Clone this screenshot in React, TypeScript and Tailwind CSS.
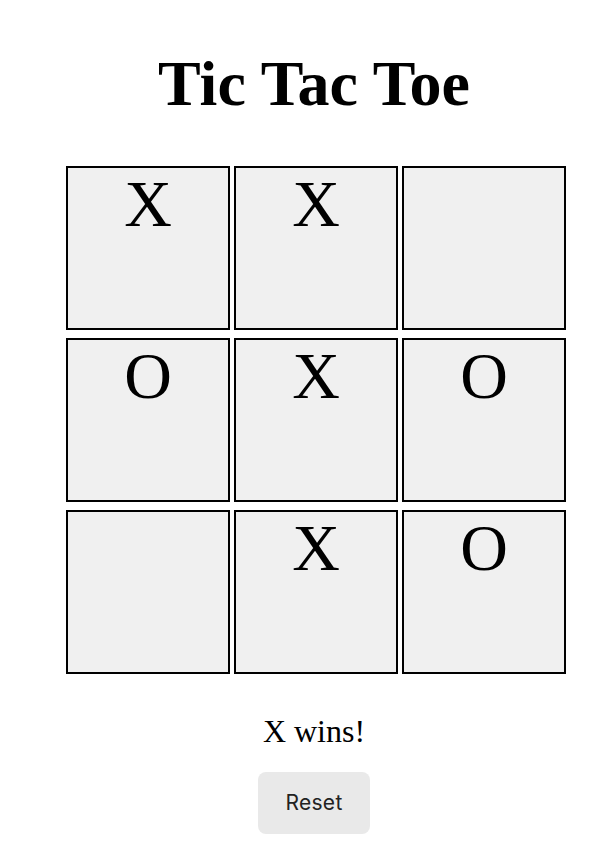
import React from 'react';

const board = ['X', 'X', '', 'O', 'X', 'O', '', 'X', 'O'];

export default function App() {
    return (
        <div className="min-h-screen bg-white flex flex-col items-center pl-[14px] text-black font-['Liberation_Serif',serif]">
            <h1 className="mt-[52px] text-[64px] font-bold leading-none">Tic Tac Toe</h1>

            <div className="mt-[50px] ml-[4px] grid grid-cols-[repeat(3,164px)] gap-x-1 gap-y-2">
                {board.map((cell, i) => (
                    <div
                        key={i}
                        className="w-[164px] h-[164px] border-2 border-black bg-[#f0f0f0] text-center text-[66px] leading-[71px]"
                    >
                        {cell}
                    </div>
                ))}
            </div>

            <p className="mt-[41px] text-[32px] leading-none">X wins!</p>

            <button className="mt-[25px] w-[112px] h-[62px] rounded-lg bg-[#e9e9e9] text-[21px] tracking-[0.3px] text-[#222] font-['Inter',sans-serif]">
                Reset
            </button>
        </div>
    );
}
